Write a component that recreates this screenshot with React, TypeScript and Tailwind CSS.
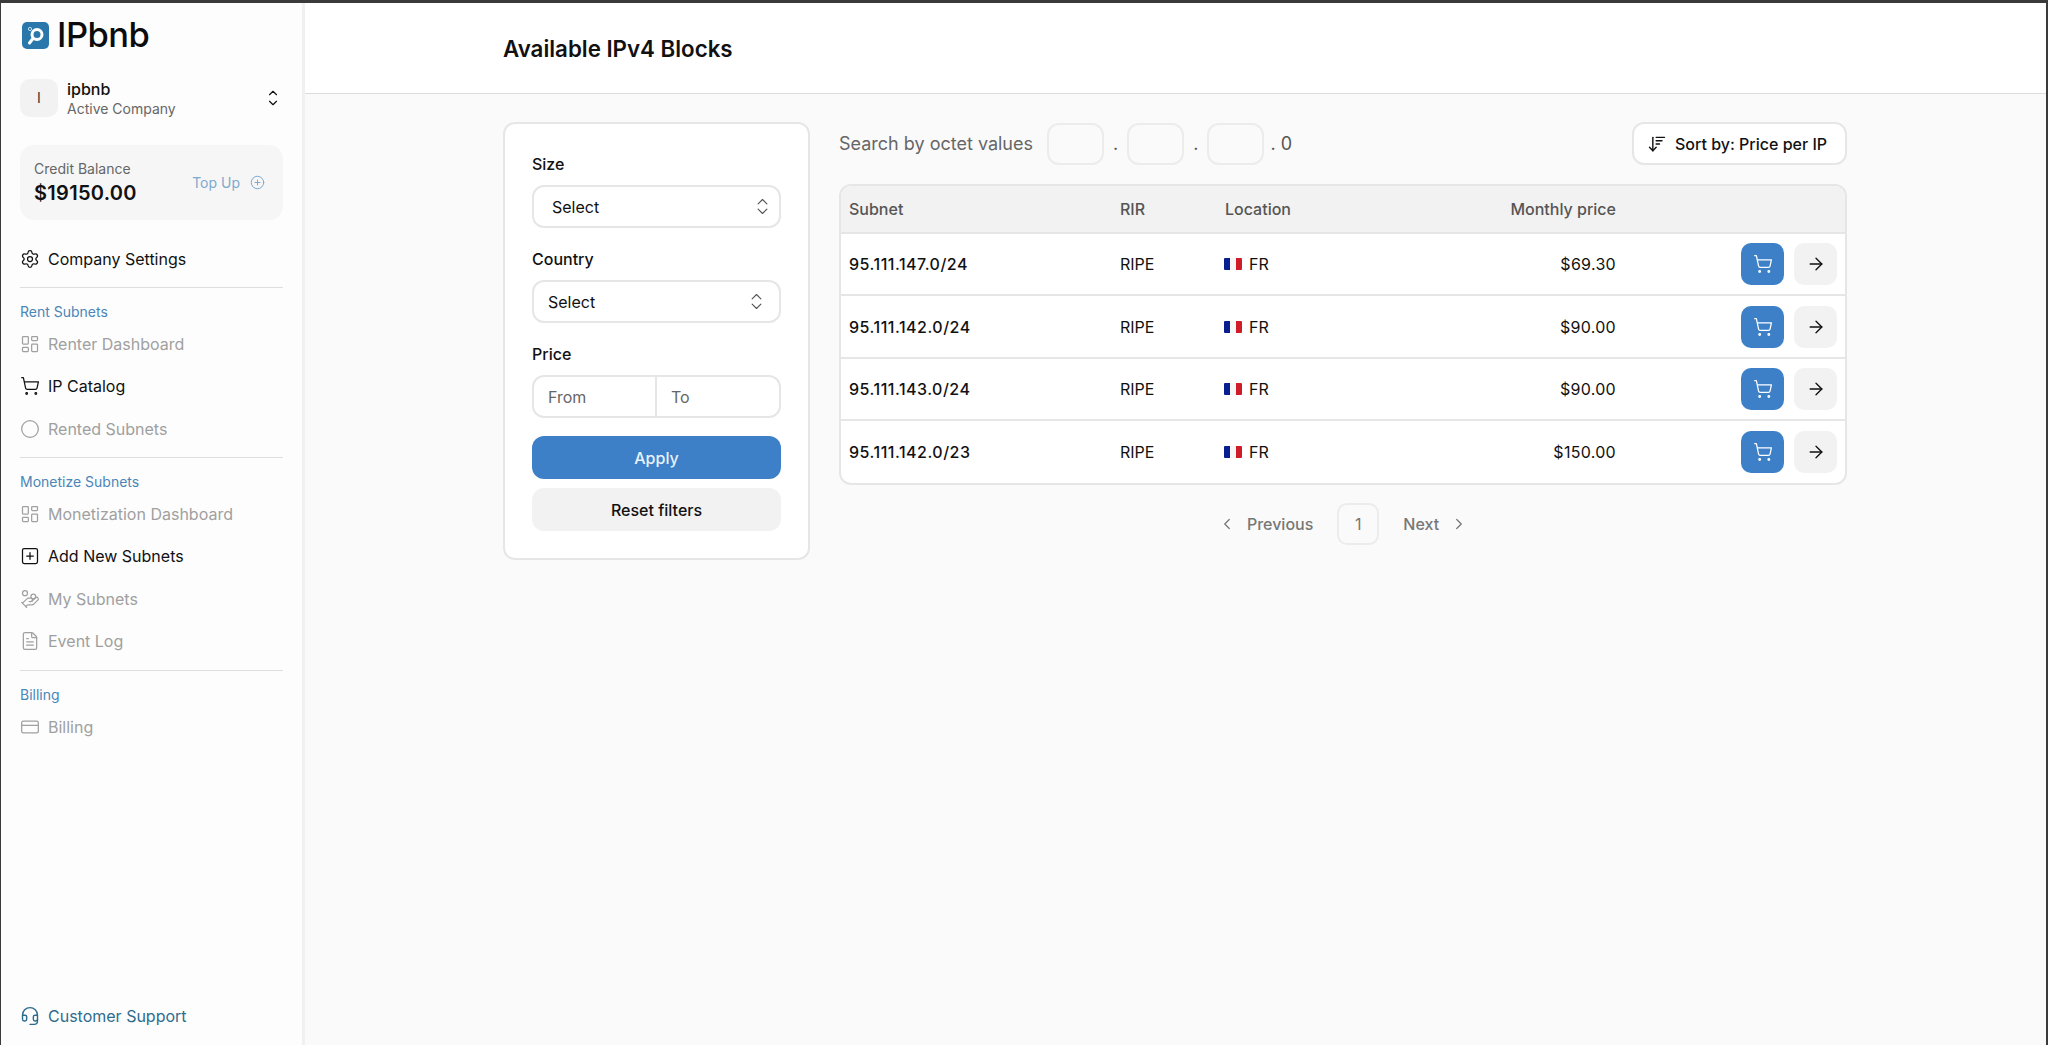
import {
  ArrowRight,
  ArrowDownWideNarrow,
  ChevronLeft,
  ChevronRight,
  ChevronsUpDown,
  ChevronUp,
  ChevronDown,
  Circle,
  CirclePlus,
  CreditCard,
  FileText,
  HandCoins,
  Headset,
  LayoutDashboard,
  Settings,
  ShoppingCart,
  SquarePlus,
} from "lucide-react";

const ROWS = [
  { subnet: "95.111.147.0/24", price: "$69.30" },
  { subnet: "95.111.142.0/24", price: "$90.00" },
  { subnet: "95.111.143.0/24", price: "$90.00" },
  { subnet: "95.111.142.0/23", price: "$150.00" },
];

function Logo() {
  return (
    <svg width="27" height="27" viewBox="0 0 27 27" className="shrink-0">
      <rect width="27" height="27" rx="5" fill="#2a77ac" />
      <circle cx="15" cy="12.5" r="5" fill="none" stroke="#fff" strokeWidth="3" />
      <path d="M11 16.5 L7.5 21" stroke="#fff" strokeWidth="3" strokeLinecap="round" />
      <circle cx="8" cy="7" r="1.6" fill="none" stroke="#bfe3f5" strokeWidth="1" />
    </svg>
  );
}

function NavItem({
  icon: Icon,
  label,
  active,
}: {
  icon: typeof Settings;
  label: string;
  active?: boolean;
}) {
  return (
    <div className={`flex h-[42.6px] items-center gap-[8px] text-base ${active ? "text-[#111]" : "text-[#a0a0a0]"}`}>
      <Icon size={20} strokeWidth={1.5} className="shrink-0" />
      <span>{label}</span>
    </div>
  );
}

function SectionLabel({ children }: { children: string }) {
  return <div className="mt-[14px] h-[20px] text-sm leading-[20px] text-[#4a86b8]">{children}</div>;
}

function Sidebar() {
  return (
    <aside className="flex w-[304px] shrink-0 flex-col border-r-[3px] border-[#f0f0f0] bg-[#fdfdfd] pr-[19px] pl-[19px]">
      <div className="mt-[16px] flex h-[33px] items-center gap-[8px] pl-[2px]">
        <Logo />
        <span className="text-[34.5px] leading-none font-medium tracking-[-0.5px] text-[#0c0c0c]">IPbnb</span>
      </div>

      <div className="mt-[27px] flex h-[38px] items-center">
        <div className="flex h-[38px] w-[38px] items-center justify-center rounded-[10px] bg-[#f2f2f2] text-sm text-[#333]">
          I
        </div>
        <div className="ml-[9px] flex-1">
          <div className="text-base leading-[20px] font-medium text-[#111]">ipbnb</div>
          <div className="mt-[1px] text-sm leading-[18px] text-[#666]">Active Company</div>
        </div>
        <div className="mr-[3px] flex flex-col items-center text-[#111]">
          <ChevronUp size={14} strokeWidth={2} className="-mb-[4px]" />
          <ChevronDown size={14} strokeWidth={2} />
        </div>
      </div>

      <div className="mt-[28px] flex h-[75px] items-center justify-between rounded-[14px] bg-[#f6f6f7] pr-[18px] pl-[14px]">
        <div>
          <div className="-mt-[1px] text-sm leading-[20px] text-[#666]">Credit Balance</div>
          <div className="mt-[1px] text-[20px] leading-[26px] font-semibold tracking-[0.3px] text-[#111]">$19150.00</div>
        </div>
        <div className="flex items-center gap-[10px] text-sm text-[#7ea9cd]">
          <span>Top Up</span>
          <CirclePlus size={15} strokeWidth={1.6} />
        </div>
      </div>

      <div className="mt-[18px]">
        <NavItem icon={Settings} label="Company Settings" active />
      </div>
      <div className="mt-[6px] h-px bg-[#dedede]" />

      <SectionLabel>Rent Subnets</SectionLabel>
      <div className="mt-[1px]">
        <NavItem icon={LayoutDashboard} label="Renter Dashboard" />
        <NavItem icon={ShoppingCart} label="IP Catalog" active />
        <NavItem icon={Circle} label="Rented Subnets" />
      </div>
      <div className="mt-[7px] h-px bg-[#dedede]" />

      <SectionLabel>Monetize Subnets</SectionLabel>
      <NavItem icon={LayoutDashboard} label="Monetization Dashboard" />
      <NavItem icon={SquarePlus} label="Add New Subnets" active />
      <NavItem icon={HandCoins} label="My Subnets" />
      <NavItem icon={FileText} label="Event Log" />
      <div className="mt-[7px] h-px bg-[#dedede]" />

      <SectionLabel>Billing</SectionLabel>
      <div className="mt-[1px]">
        <NavItem icon={CreditCard} label="Billing" />
      </div>

      <div className="mt-auto mb-[8px] flex h-[42px] items-center gap-[8px] text-base text-[#2e6c8e]">
        <Headset size={20} strokeWidth={1.7} />
        <span>Customer Support</span>
      </div>
    </aside>
  );
}

function Field({ label, children }: { label: string; children: React.ReactNode }) {
  return (
    <div>
      <div className="mb-[11px] h-[20px] text-base leading-[20px] font-medium text-[#111]">{label}</div>
      {children}
    </div>
  );
}

function SelectBox({ indent }: { indent: string }) {
  return (
    <div className={`flex h-[43px] items-center justify-between rounded-[12px] border-2 border-[#e6e6e6] bg-white ${indent}`}>
      <span className="text-base text-[#111]">Select</span>
      <ChevronsUpDown size={21} strokeWidth={1.3} className="text-[#555]" />
    </div>
  );
}

function Filters() {
  return (
    <div className="h-[438px] w-[307px] shrink-0 rounded-[12px] border-2 border-[#e6e6e6] bg-white px-[27px] pt-[30px]">
      <Field label="Size">
        <SelectBox indent="pr-[6px] pl-[18px]" />
      </Field>
      <div className="mt-[21px]">
        <Field label="Country">
          <SelectBox indent="pr-[12px] pl-[14px]" />
        </Field>
      </div>
      <div className="mt-[21px]">
        <Field label="Price">
          <div className="flex h-[43px] rounded-[12px] border-2 border-[#e6e6e6] bg-white text-base text-[#666]">
            <div className="flex w-[123px] items-center border-r-2 border-[#e6e6e6] pl-[14px]">From</div>
            <div className="flex flex-1 items-center pl-[14px]">To</div>
          </div>
        </Field>
      </div>
      <div className="mt-[18px] flex h-[43px] items-center justify-center rounded-[12px] bg-[#3d80c8] text-base font-medium text-[#e8f2fb]">
        Apply
      </div>
      <div className="mt-[9px] flex h-[43px] items-center justify-center rounded-[12px] bg-[#f2f2f2] text-base font-medium text-[#111]">
        Reset filters
      </div>
    </div>
  );
}

function OctetBox() {
  return <div className="h-[42px] w-[57px] rounded-[12px] border-2 border-[#ececec]" />;
}

function Results() {
  return (
    <div className="flex-1">
      <div className="flex h-[43px] items-center">
        <span className="text-[18px] text-[#666]">Search by octet values</span>
        <div className="ml-[14px] flex items-center gap-[9px]">
          <OctetBox />
          <span className="text-[18px] text-[#555]">.</span>
          <OctetBox />
          <span className="text-[18px] text-[#555]">.</span>
          <OctetBox />
        </div>
        <span className="ml-[6px] text-[18px] text-[#555]">. 0</span>
        <div className="ml-auto flex h-[43px] w-[215px] items-center gap-[8px] rounded-[12px] border-2 border-[#e6e6e6] bg-white pl-[13px] text-base font-medium text-[#111]">
          <ArrowDownWideNarrow size={20} strokeWidth={1.7} />
          <span>Sort by: Price per IP</span>
        </div>
      </div>

      <div className="mt-[19px] overflow-hidden rounded-[12px] border-2 border-[#e6e6e6] bg-white">
        <table className="w-full table-fixed border-collapse text-base">
          <thead>
            <tr className="h-[47px] bg-[#f2f2f2] text-left text-[#555]">
              <th className="w-[279px] pl-[8px] font-medium">Subnet</th>
              <th className="w-[105px] font-medium">RIR</th>
              <th className="w-[120px] font-medium">Location</th>
              <th className="w-[271px] text-right font-medium">Monthly price</th>
              <th />
            </tr>
          </thead>
          <tbody>
            {ROWS.map((row) => (
              <tr key={row.subnet} className="h-[62.4px] border-t-2 border-[#e6e6e6] text-[#111]">
                <td className="pl-[8px] font-medium tracking-[0.5px]">{row.subnet}</td>
                <td>RIPE</td>
                <td>
                  <div className="-ml-[1px] flex items-center gap-[7px]">
                    <div className="flex h-[12px] w-[18px] overflow-hidden rounded-[1px]">
                      <div className="flex-1 bg-[#0a1f8f]" />
                      <div className="flex-1 bg-[#f7f7f7]" />
                      <div className="flex-1 bg-[#d01c28]" />
                    </div>
                    <span>FR</span>
                  </div>
                </td>
                <td className="text-right tracking-[0.3px]">{row.price}</td>
                <td>
                  <div className="flex justify-end gap-[10px] pr-[8px]">
                    <div className="flex h-[42px] w-[43px] items-center justify-center rounded-[10px] bg-[#3d80c8] text-white">
                      <ShoppingCart size={20} strokeWidth={1.5} />
                    </div>
                    <div className="flex h-[42px] w-[43px] items-center justify-center rounded-[10px] bg-[#f2f2f2] text-[#111]">
                      <ArrowRight size={20} strokeWidth={1.6} />
                    </div>
                  </div>
                </td>
              </tr>
            ))}
          </tbody>
        </table>
      </div>

      <div className="mt-[18px] flex items-center justify-center text-base font-medium text-[#777]">
        <ChevronLeft size={18} strokeWidth={1.7} />
        <span className="ml-[11px]">Previous</span>
        <div className="mx-[24px] flex h-[42px] w-[42px] items-center justify-center rounded-[10px] border-2 border-[#ececec] font-normal">
          1
        </div>
        <span>Next</span>
        <ChevronRight size={18} strokeWidth={1.7} className="ml-[11px]" />
      </div>
    </div>
  );
}

export default function App() {
  return (
    <div
      className="flex h-[1045px] w-[2048px] overflow-hidden border-t-[3px] border-r-2 border-l border-[#3a3a3a] bg-[#fafafa]"
      style={{ fontFamily: "Inter, 'Noto Sans', sans-serif" }}
    >
      <Sidebar />
      <main className="flex-1">
        <header className="flex h-[91px] items-center border-b border-[#dcdcdc] bg-white pt-[2px] pl-[198px]">
          <h1 className="text-[22.3px] font-semibold text-[#111]">Available IPv4 Blocks</h1>
        </header>
        <div className="flex gap-[29px] pt-[28px] pr-[199px] pl-[198px]">
          <Filters />
          <Results />
        </div>
      </main>
    </div>
  );
}
